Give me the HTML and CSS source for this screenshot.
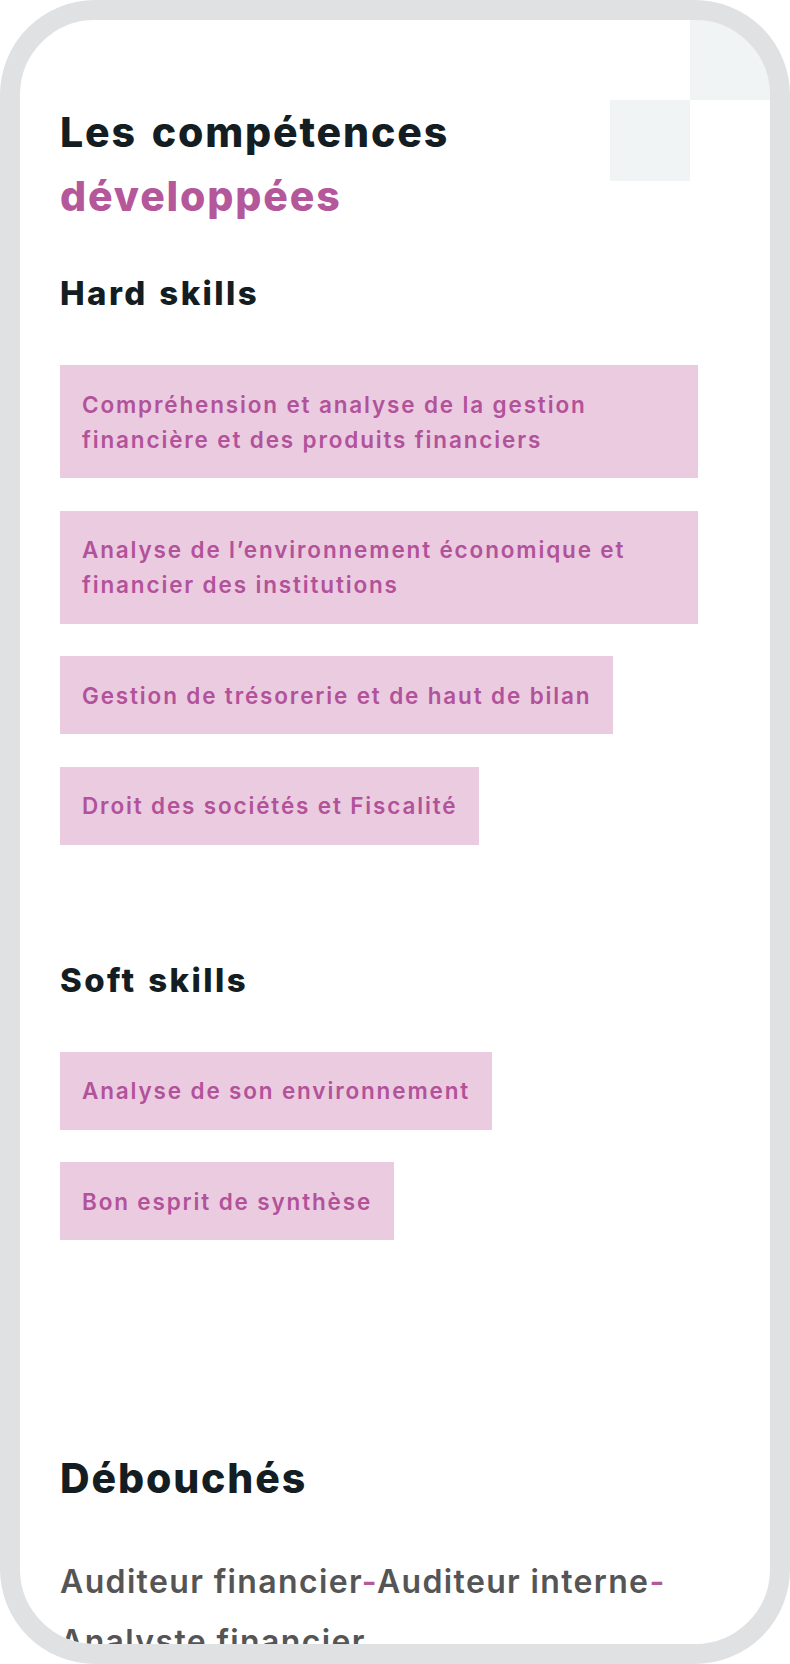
FILE: index.html
```html
<!DOCTYPE html>
<html lang="fr">
<head>
<meta charset="utf-8">
<title>Compétences</title>
<link rel="stylesheet" href="styles.css">
</head>
<body>
<div class="phone">
  <div class="content">
    <h2 class="title">Les compétences <span class="accent">développées</span></h2>

    <section class="skills hard">
      <h3 class="subtitle">Hard skills</h3>
      <ul class="tags">
        <li class="tag">Compréhension et analyse de la gestion financière et des produits financiers</li>
        <li class="tag">Analyse de l’environnement économique et financier des institutions</li>
        <li class="tag">Gestion de trésorerie et de haut de bilan</li>
        <li class="tag">Droit des sociétés et Fiscalité</li>
      </ul>
    </section>

    <section class="skills soft">
      <h3 class="subtitle">Soft skills</h3>
      <ul class="tags">
        <li class="tag">Analyse de son environnement</li>
        <li class="tag">Bon esprit de synthèse</li>
      </ul>
    </section>

    <section class="jobs">
      <h2 class="title">Débouchés</h2>
      <p class="job-list"><span>Auditeur financier</span><span class="sep">-</span><span>Auditeur interne</span><span class="sep">-</span><span>Analyste financier</span></p>
    </section>
  </div>
</div>
</body>
</html>
```

FILE: styles.css
```css
html, body {
  margin: 0;
  padding: 0;
  background: #ffffff;
}

.phone {
  box-sizing: border-box;
  width: 790px;
  height: 1664px;
  border: 20px solid #e0e1e3;
  border-radius: 95px;
  overflow: hidden;
  background-color: #ffffff;
  background-image:
    linear-gradient(#f1f4f5, #f1f4f5),
    linear-gradient(#f1f4f5, #f1f4f5);
  background-repeat: no-repeat;
  background-size: 80px 80px, 80px 81px;
  background-position: 670px 0, 590px 80px;
  font-family: "Inter", "Lato", "Liberation Sans", sans-serif;
}

.content {
  padding: 80px 72px 0 40px;
}

.title {
  margin: 0;
  font-size: 41px;
  line-height: 64px;
  font-weight: 800;
  color: #141d21;
  letter-spacing: 1.85px;
  word-spacing: 4px;
}

.accent {
  display: block;
  color: #b4579b;
}

.subtitle {
  margin: 44px 0 50px;
  font-size: 33px;
  line-height: 43px;
  font-weight: 800;
  letter-spacing: 2.4px;
  word-spacing: 2px;
  color: #141d21;
}

.soft .subtitle {
  margin-top: 114px;
}

.tags {
  list-style: none;
  margin: 0;
  padding: 0;
  display: flex;
  flex-direction: column;
  align-items: flex-start;
  gap: 32.5px;
}

.tag {
  background: #ebcbe0;
  color: #b2529a;
  font-size: 22.5px;
  line-height: 35px;
  font-weight: 600;
  letter-spacing: 1.85px;
  padding: 21.5px 22px;
}

.jobs {
  margin-top: 206px;
}

.job-list {
  margin: 42px 0 0;
  font-size: 32px;
  line-height: 60px;
  font-weight: 600;
  letter-spacing: 1.35px;
  color: #555556;
}

.sep {
  color: #b4579b;
}
```
